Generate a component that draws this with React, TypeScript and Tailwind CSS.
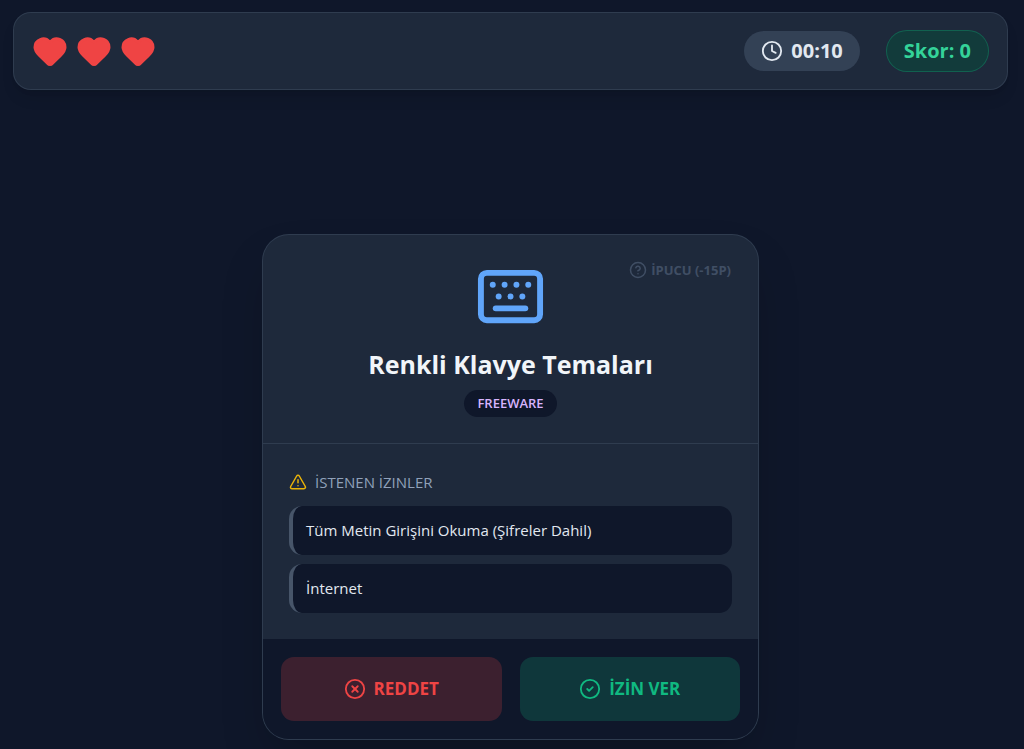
import {
  CircleCheck,
  CircleQuestionMark,
  CircleX,
  Clock,
  Heart,
  Keyboard,
  TriangleAlert,
} from "lucide-react";

const permissions = ["Tüm Metin Girişini Okuma (Şifreler Dahil)", "İnternet"];

const StatusBar = () => {
  return (
    <header className="flex items-center justify-between rounded-[18px] border border-[#334155]/80 bg-[#1e293b] px-[18px] py-[17px] shadow-lg">
      <div className="flex gap-2">
        {[1, 2, 3].map((life) => (
          <Heart key={life} className="h-9 w-9 fill-[#ef4444] text-[#ef4444]" />
        ))}
      </div>
      <div className="flex items-center gap-[26px] text-[20px] font-bold">
        <div className="flex h-10 items-center gap-2 rounded-full bg-[#334155] px-[17px] text-slate-200">
          <Clock className="h-[22px] w-[22px]" />
          <span>00:10</span>
        </div>
        <div className="flex h-[42px] items-center rounded-full border border-[#10b981]/30 bg-[#064e3b]/50 px-[17px] text-[#34d399]">
          Skor: 0
        </div>
      </div>
    </header>
  );
};

const AppCard = () => {
  return (
    <div className="w-full max-w-[497px] overflow-hidden rounded-[27px] border border-[#334155]/80 bg-[#1e293b] shadow-2xl">
      <div className="relative flex flex-col items-center border-b border-[#334155]/80 p-[26px]">
        <button className="absolute top-[26px] right-[27px] flex items-center gap-1 text-[13px] leading-[18px] font-bold text-slate-500 opacity-50">
          <CircleQuestionMark className="h-[18px] w-[18px]" />
          İPUCU (-15P)
        </button>
        <Keyboard className="h-[71px] w-[71px] text-[#60a5fa]" />
        <h2 className="mt-4 text-[25px] leading-8 font-bold text-slate-100">
          Renkli Klavye Temaları
        </h2>
        <span className="mt-[10px] rounded-full bg-[#0f172a] px-[13px] py-1 text-[13px] leading-[19px] font-semibold text-[#d8b4fe]">
          FREEWARE
        </span>
      </div>
      <div className="p-[26px]">
        <h3 className="mb-3 flex items-center gap-2 text-[15px] leading-6 text-slate-400">
          <TriangleAlert className="h-[18px] w-[18px] text-[#eab308]" />
          İSTENEN İZINLER
        </h3>
        <ul className="flex flex-col gap-[9px]">
          {permissions.map((permission) => (
            <li
              key={permission}
              className="rounded-[13px] border-l-4 border-[#475569] bg-[#0f172a] px-[13px] py-3 text-[15px] leading-[25px] text-slate-200"
            >
              {permission}
            </li>
          ))}
        </ul>
      </div>
      <div className="grid grid-cols-2 gap-[18px] bg-[#0f172a] p-[18px]">
        <button className="flex h-16 items-center justify-center gap-2 rounded-[13px] bg-[#ef4444]/20 text-[17px] font-bold text-[#ef4444]">
          <CircleX className="h-[22px] w-[22px]" />
          REDDET
        </button>
        <button className="flex h-16 items-center justify-center gap-2 rounded-[13px] bg-[#10b981]/20 text-[17px] font-bold text-[#10b981]">
          <CircleCheck className="h-[22px] w-[22px]" />
          İZİN VER
        </button>
      </div>
    </div>
  );
};

const App = () => {
  return (
    <div className="flex min-h-screen flex-col bg-[#0f172a] pt-3 pr-4 pb-[9px] pl-[13px] font-['Segoe_UI','Open_Sans','Noto_Sans',sans-serif]">
      <StatusBar />
      <main className="flex flex-1 flex-col items-center justify-end">
        <AppCard />
      </main>
    </div>
  );
};

export default App;
